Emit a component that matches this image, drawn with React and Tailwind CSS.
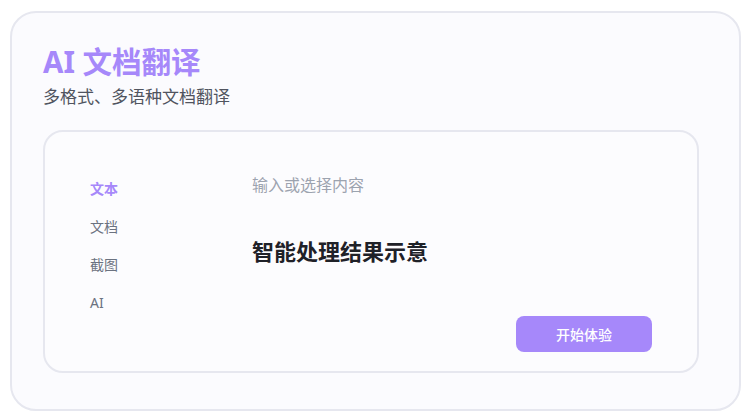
import React from 'react';

const tabs = ['文本', '文档', '截图', 'AI'];

export default function App() {
  return (
    <div className="w-[750px] h-[420px] bg-white pt-[11px] pl-[10px]" style={{ fontFamily: '"Noto Sans", "Noto Sans CJK SC", sans-serif' }}>
      <div className="w-[731px] h-[400px] rounded-[26px] border-2 border-[#e6e7ef] bg-[#fbfbfe] pl-[31px] pt-[29px]">
        <h1 className="text-[29.5px] leading-[40px] font-bold text-[#a688fa]">AI 文档翻译</h1>
        <p className="text-[17px] leading-[24px] text-[#50545f] mt-[3px]">多格式、多语种文档翻译</p>

        <div className="mt-[21px] w-[656px] h-[243px] rounded-[20px] border-2 border-[#e6e7ef] bg-[#fcfcfe] flex pl-[45px] pr-[45px] pt-[43px] pb-[19px]">
          <div className="w-[162px] flex flex-col gap-[18px] pt-[4px]">
            {tabs.map((t, i) => (
              <div
                key={t}
                className={`text-[14px] leading-[20px] ${i === 0 ? 'font-bold text-[#a688fa]' : 'text-[#6b7280]'}`}
              >
                {t}
              </div>
            ))}
          </div>
          <div className="flex-1 flex flex-col">
            <div className="text-[16px] leading-[20px] text-[#9ca3af]">输入或选择内容</div>
            <div className="mt-[41px] text-[22px] leading-[30px] font-bold text-[#1f2128]">智能处理结果示意</div>
            <button className="mt-auto self-end w-[136px] h-[36px] rounded-[8px] bg-[#a688fa] text-white text-[14px] font-medium">
              开始体验
            </button>
          </div>
        </div>
      </div>
    </div>
  );
}
